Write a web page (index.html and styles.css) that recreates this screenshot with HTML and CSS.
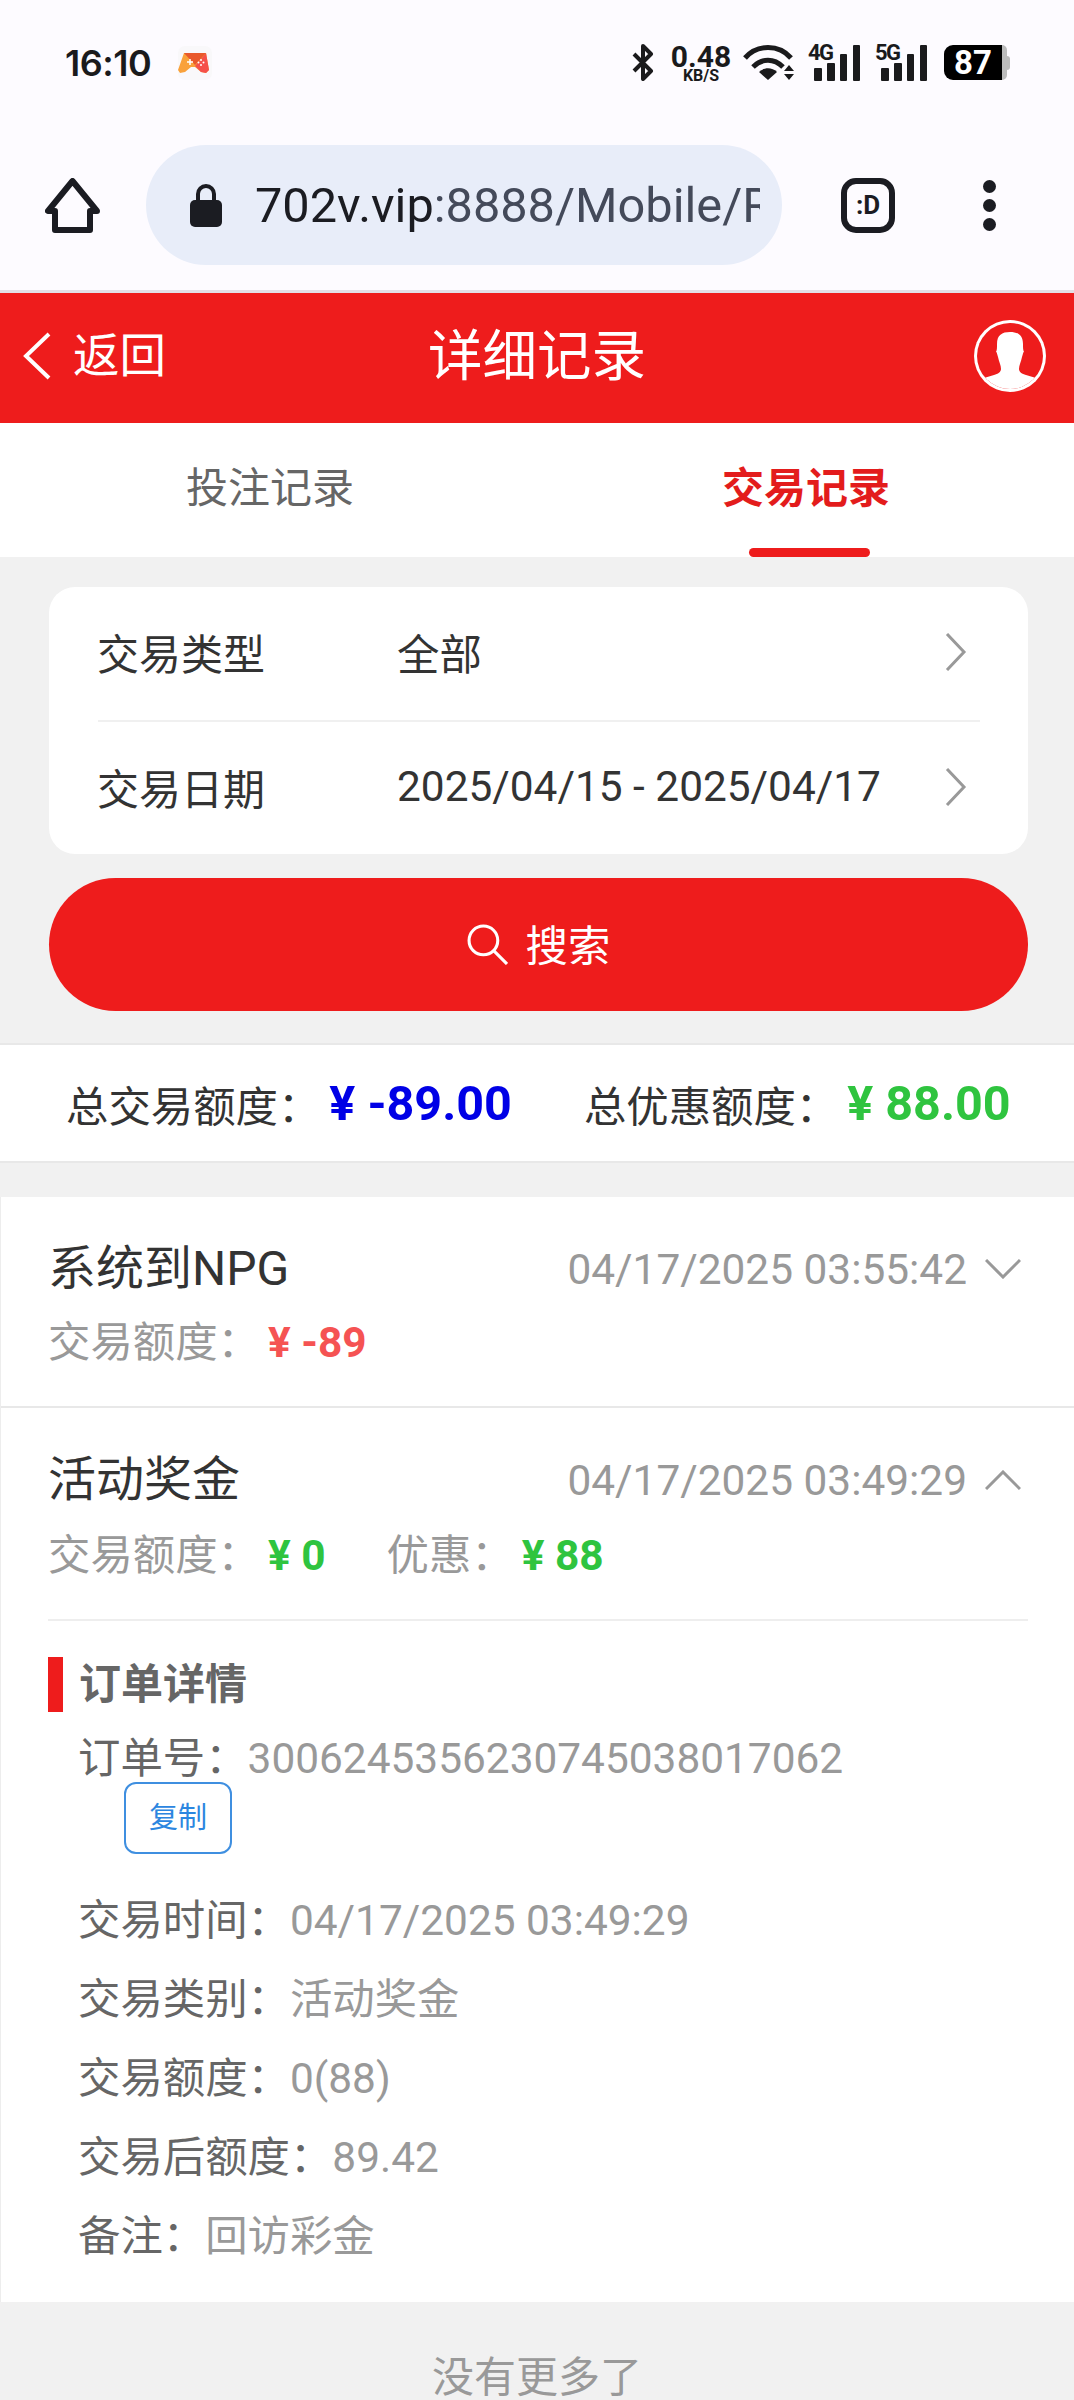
FILE: index.html
```html
<!DOCTYPE html>
<html lang="zh-CN">
<head>
<meta charset="utf-8">
<title>详细记录</title>
<link rel="stylesheet" href="styles.css">
</head>
<body>
<div class="page">
  <div class="chrome">
    <div class="statusbar">
      <div class="status-left">
        <span class="clock">16:10</span>
        <svg class="game" viewBox="0 0 34 34"><rect width="34" height="34" rx="7" fill="#f9f8fa"/><path d="M6 7h22l3 17-3 3-5-1-6-5h-4l-6 5-5 1-2-3z" fill="#f9a13a"/><path d="M17 20L28 7l3 17-3 3-5-1z" fill="#f5504a"/><path d="M6 7h22L17 19z" fill="#e9592c"/><path d="M9 16h6M12 13v6" stroke="#fff" stroke-width="1.500"/><circle cx="23" cy="14" r="1" fill="#fff"/><circle cx="23" cy="19" r="1" fill="#fff"/><circle cx="20.500" cy="16.500" r="1" fill="#fff"/><circle cx="25.500" cy="16.500" r="1" fill="#fff"/></svg>
      </div>
      <div class="status-right">
        <svg class="ic-bt" viewBox="0 0 22 37"><path d="M2 10l17 17-8 8V2l8 8L2 27" fill="none" stroke="#1a1a1c" stroke-width="4" stroke-linejoin="round"/></svg>
        <div class="speed"><span class="speed-num">0.48</span><span class="speed-unit">KB/S</span></div>
        <svg class="ic-wifi" viewBox="0 0 51 37"><path d="M2 14C14 0 36 0 48 14" fill="none" stroke="#1a1a1c" stroke-width="5"/><path d="M10 23c9-9 21-9 30 0" fill="none" stroke="#1a1a1c" stroke-width="5"/><path d="M16 28c5-5 13-5 18 0l-9 8z" fill="#1a1a1c"/><path d="M46 21l5 6H41zM41 30h10l-5 6z" fill="#1a1a1c"/></svg>
        <div class="sig"><span class="sig-label">4G</span><svg class="sig-bars" viewBox="0 0 52 37"><rect x="6" y="24" width="8" height="13" rx="1"/><rect x="19" y="19" width="8" height="18" rx="1"/><rect x="32" y="10" width="7" height="27" rx="1"/><rect x="45" y="1" width="7" height="36" rx="1"/></svg></div>
        <div class="sig"><span class="sig-label">5G</span><svg class="sig-bars" viewBox="0 0 52 37"><rect x="6" y="24" width="8" height="13" rx="1"/><rect x="19" y="19" width="8" height="18" rx="1"/><rect x="32" y="10" width="7" height="27" rx="1"/><rect x="45" y="1" width="7" height="36" rx="1"/></svg></div>
        <div class="battery"><span class="battery-level">87</span><span class="battery-rest"></span><span class="battery-nub"></span></div>
      </div>
    </div>
    <div class="browserbar">
      <svg class="ic-home" viewBox="0 0 55 55"><path d="M27.500 3L3 33h7v19h35V33h7z" fill="none" stroke="#1b1c22" stroke-width="6" stroke-linejoin="round"/></svg>
      <div class="urlpill">
        <svg class="ic-lock" viewBox="0 0 32 44"><path d="M8 18V11a8 8 0 0 1 16 0v7" fill="none" stroke="#1b1c22" stroke-width="4"/><rect x="0" y="17" width="32" height="27" rx="5" fill="#1b1c22"/></svg>
        <div class="url"><span class="url-host">702v.vip</span>:8888/Mobile/R</div>
      </div>
      <div class="ic-tab">:D</div>
      <div class="ic-more"><i></i><i></i><i></i></div>
    </div>
  </div>

  <header class="topbar">
    <div class="back">
      <svg class="ic-back" viewBox="0 0 28 48"><path d="M26 2L3 24l23 22" fill="none" stroke="#fff" stroke-width="4"/></svg>
      <span>返回</span>
    </div>
    <div class="title">详细记录</div>
    <div class="avatar-wrap">
      <svg class="avatar" viewBox="0 0 72 72"><defs><clipPath id="avatar-clip"><circle cx="36" cy="36" r="33"/></clipPath></defs><circle cx="36" cy="36" r="36" fill="#fff"/><circle cx="36" cy="36" r="33" fill="#ee1c1c"/><path clip-path="url(#avatar-clip)" d="M36 12c-8 0-13 3-13 12 0 4 0 6-1 8 1 0 1 2 2 5 1 5 3 8 3 12 0 3-3 5-7 6l-10 3v14h52V58l-10-3c-4-1-7-3-7-6 0-4 2-7 3-12 1-3 1-5 2-5-1-2-1-4-1-8 0-9-5-12-13-12z" fill="#fff"/></svg>
    </div>
  </header>

  <nav class="tabs">
    <div class="tab">投注记录</div>
    <div class="tab tab-active">交易记录</div>
  </nav>

  <section class="filter">
    <div class="card">
      <div class="card-row">
        <span class="card-label">交易类型</span>
        <span class="card-value">全部</span>
        <svg class="ic-right" viewBox="0 0 22 38"><path d="M2 1l17 18L2 37" fill="none" stroke="#999" stroke-width="3"/></svg>
      </div>
      <div class="card-row">
        <span class="card-label">交易日期</span>
        <span class="card-value">2025/04/15 - 2025/04/17</span>
        <svg class="ic-right" viewBox="0 0 22 38"><path d="M2 1l17 18L2 37" fill="none" stroke="#999" stroke-width="3"/></svg>
      </div>
    </div>
    <div class="search">
      <svg class="ic-search" viewBox="0 0 40 40"><circle cx="16" cy="16" r="14" fill="none" stroke="#fff" stroke-width="3"/><path d="M26 26l13 13" stroke="#fff" stroke-width="3"/></svg>
      <span>搜索</span>
    </div>
  </section>

  <section class="summary">
    <span class="sum-label">总交易额度：</span><span class="sum-amount amount-blue">¥ -89.00</span>
    <span class="sum-label sum-second">总优惠额度：</span><span class="sum-amount amount-green">¥ 88.00</span>
  </section>

  <section class="list">
    <article class="item item-border">
      <div class="item-head">
        <span class="item-name">系统到NPG</span>
        <span class="item-time">04/17/2025 03:55:42</span>
        <svg class="ic-fold" viewBox="0 0 36 20"><path d="M1 1l17 17L35 1" fill="none" stroke="#999" stroke-width="3"/></svg>
      </div>
      <div class="item-sub"><span>交易额度：</span><b class="amount-red">¥ -89</b></div>
    </article>
    <article class="item">
      <div class="item-head">
        <span class="item-name">活动奖金</span>
        <span class="item-time">04/17/2025 03:49:29</span>
        <svg class="ic-fold" viewBox="0 0 36 20"><path d="M1 19L18 2l17 17" fill="none" stroke="#999" stroke-width="3"/></svg>
      </div>
      <div class="item-sub item-sub-open"><span>交易额度：</span><b class="amount-green">¥ 0</b><span class="sub-second">优惠：</span><b class="amount-green">¥ 88</b></div>
      <div class="details">
        <h3 class="details-title">订单详情</h3>
        <div class="order-row"><span class="d-label">订单号：</span><span class="d-value">3006245356230745038017062</span></div>
        <div class="copy">复制</div>
        <div class="d-row"><span class="d-label">交易时间：</span><span class="d-value">04/17/2025 03:49:29</span></div>
        <div class="d-row"><span class="d-label">交易类别：</span><span class="d-value">活动奖金</span></div>
        <div class="d-row"><span class="d-label">交易额度：</span><span class="d-value">0(88)</span></div>
        <div class="d-row"><span class="d-label">交易后额度：</span><span class="d-value">89.42</span></div>
        <div class="d-row"><span class="d-label">备注：</span><span class="d-value">回访彩金</span></div>
      </div>
    </article>
  </section>

  <div class="nomore">没有更多了</div>
</div>
</body>
</html>
```
FILE: styles.css
```css
* { box-sizing: border-box; }
html, body { margin: 0; padding: 0; }
body {
  width: 1074px;
  height: 2400px;
  overflow: hidden;
  background: #f1f1f1;
  font-family: Roboto, "Noto Sans CJK SC", sans-serif;
  font-size: 42.4px;
}
.page { width: 1074px; height: 2400px; overflow: hidden; }

/* system chrome */
.chrome { background: #fdfbff; height: 293px; border-bottom: 3px solid #e3dfe6; }
.statusbar { height: 125px; padding: 0 64px 0 65px; display: flex; align-items: center; justify-content: space-between; }
.status-left { display: flex; align-items: center; }
.clock { font-family: Inter, Roboto, sans-serif; font-size: 36px; font-weight: 600; color: #1a1a1c; width: 113px; letter-spacing: -0.5px; }
.game { width: 34px; height: 34px; }
.status-right { display: flex; align-items: center; height: 37px; }
.ic-bt { width: 22px; height: 37px; margin-right: 18px; }
.speed { width: 58px; margin-right: 13px; display: flex; flex-direction: column; align-items: center; color: #1a1a1c; font-family: Roboto, sans-serif; font-weight: 700; }
.speed-num { font-size: 30px; line-height: 25px; }
.speed-unit { font-size: 16px; line-height: 13px; }
.ic-wifi { width: 51px; height: 37px; margin-right: 14px; }
.sig { width: 52px; height: 37px; margin-right: 15px; display: flex; align-items: flex-start; }
.sig-label { width: 26px; font-family: Roboto, sans-serif; font-size: 22px; font-weight: 700; line-height: 18px; letter-spacing: -1.5px; color: #1a1a1c; }
.sig-bars { width: 52px; height: 37px; margin-left: -26px; fill: #1a1a1c; flex: none; }
.battery { display: flex; align-items: center; margin-left: 2px; }
.battery-level { width: 58px; height: 35px; background: #000; color: #fff; border-radius: 9px 0 0 9px; font-family: Roboto, sans-serif; font-size: 33px; font-weight: 700; line-height: 35px; text-align: center; }
.battery-rest { width: 5px; height: 35px; background: #bcbcbc; border-radius: 0 5px 5px 0; }
.battery-nub { width: 3px; height: 14px; background: #bcbcbc; border-radius: 0 3px 3px 0; }

.browserbar { height: 165px; padding: 20px 0 25px 45px; display: flex; align-items: center; }
.ic-home { width: 55px; height: 55px; margin-right: 46px; }
.urlpill { width: 636px; height: 120px; border-radius: 60px; background: #e8edf9; padding: 0 22px 0 44px; display: flex; align-items: center; }
.ic-lock { width: 32px; height: 44px; margin-right: 33px; flex: none; }
.url { flex: 1; overflow: hidden; white-space: nowrap; font-size: 48.7px; color: #444a5a; }
.url-host { color: #1b1c22; }
.ic-tab { width: 54px; height: 55px; margin-left: 59px; border: 6px solid #1b1c22; border-radius: 15px; font-size: 26px; font-weight: 700; color: #1b1c22; display: flex; align-items: center; justify-content: center; }
.ic-more { margin-left: 88px; width: 14px; height: 51px; display: flex; flex-direction: column; justify-content: space-between; }
.ic-more i { display: block; width: 13px; height: 13px; border-radius: 50%; background: #1b1c22; }

/* header */
.topbar { height: 130px; background: #ee1c1c; color: #fff; display: grid; grid-template-columns: 1fr auto 1fr; align-items: center; padding: 0 23px 4px 23px; }
.back { display: flex; align-items: center; font-size: 46.5px; line-height: 60px; }
.ic-back { width: 28px; height: 48px; margin-right: 22px; }
.title { font-size: 54.5px; line-height: 70px; }
.avatar-wrap { display: flex; justify-content: flex-end; padding-right: 5px; }
.avatar { width: 72px; height: 72px; }

/* tabs */
.tabs { height: 134px; background: #fff; display: grid; grid-template-columns: 1fr 1fr; padding-left: 2px; }
.tab { text-align: center; font-size: 42px; line-height: 132px; color: #666; position: relative; }
.tab-active { color: #e31c1c; font-weight: 700; }
.tab-active::after { content: ""; position: absolute; left: 211px; bottom: 0; width: 121px; height: 9px; border-radius: 5px; background: #ee1c1c; }

/* filter */
.filter { padding: 30px 46px 32px 49px; }
.card { background: #fff; border-radius: 26px; padding: 0 48px 0 49px; }
.card-row { height: 133px; padding-bottom: 4px; display: flex; align-items: center; color: #333; }
.card-row + .card-row { border-top: 2px solid #f0f0f0; height: 134px; padding-bottom: 3px; }
.card-label { width: 300px; margin-left: -1px; font-size: 42px; }
.card-value { flex: 1; }
.ic-right { width: 22px; height: 38px; margin-right: 13px; }
.search { height: 133px; margin-top: 24px; padding-bottom: 5px; border-radius: 67px; background: #ee1c1c; color: #fff; display: flex; align-items: center; justify-content: center; }
.ic-search { width: 41px; height: 41px; margin-right: 18px; margin-top: 5px; }

/* summary */
.summary { height: 120px; background: #fff; border-top: 2px solid #e8e8e8; border-bottom: 2px solid #e8e8e8; padding-left: 66px; display: flex; align-items: center; color: #333; white-space: nowrap; }
.sum-amount { font-size: 48.5px; font-weight: 700; margin-left: 9px; }
.sum-second { margin-left: 72px; }
.amount-blue { color: #0000e6; }
.amount-green { color: #2fc43f; }
.amount-red { color: #f55353; }

/* list */
.list { margin-top: 34px; background: #fff; border-left: 1px solid #ededed; }
.item { padding: 42px 46px 0 47px; }
.item-border { height: 211px; border-bottom: 2px solid #e8e8e8; }
.item-head { display: flex; align-items: center; height: 60px; }
.item-name { flex: 1; font-size: 48px; line-height: 60px; color: #333; }
.item-time { color: #999; }
.ic-fold { width: 36px; height: 20px; margin-left: 18px; margin-right: 7px; }
.item-sub { margin-top: 19px; line-height: 50px; color: #999; display: flex; }
.item-sub-open { margin-top: 21px; }
.item-sub b { font-weight: 700; margin-left: 8px; }
.sub-second { margin-left: 61px; }
.details { margin-top: 38px; border-top: 2px solid #eeeeee; padding: 36px 0 26px; }
.details-title { margin: 0; height: 55px; border-left: 15px solid #ee1c1c; padding-left: 16px; font-size: 42px; line-height: 55px; font-weight: 700; color: #666; }
.order-row { margin-top: 24px; padding-left: 30px; line-height: 46px; white-space: nowrap; }
.copy { width: 108px; height: 72px; margin-left: 76px; margin-bottom: 27px; border: 2px solid #3f8fe0; border-radius: 12px; font-size: 29px; line-height: 68px; text-align: center; color: #2c86e0; background: #fff; }
.d-row { padding-left: 30px; height: 79px; line-height: 79px; white-space: nowrap; }
.d-label { color: #666; }
.d-value { color: #999; }

.nomore { margin-top: 54px; text-align: center; font-size: 42px; line-height: 44px; color: #999; }
```
